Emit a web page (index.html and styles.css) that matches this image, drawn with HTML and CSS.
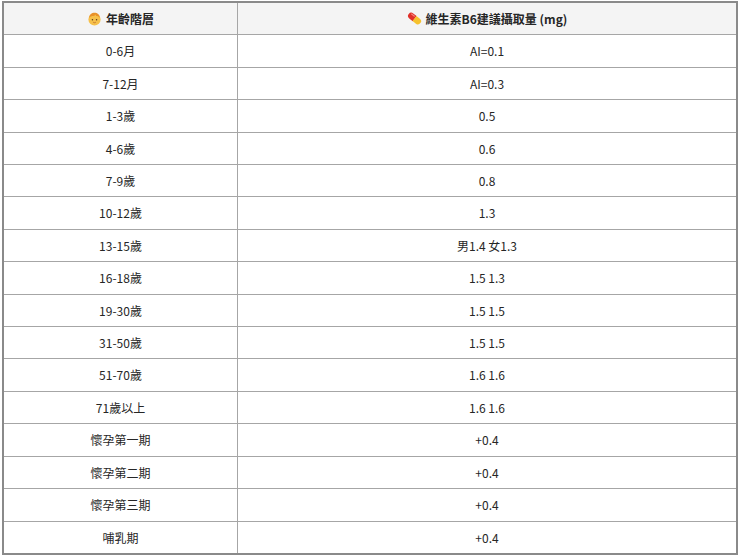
FILE: index.html
```html
<!DOCTYPE html>
<html lang="zh-Hant">
<head>
<meta charset="utf-8">
<link rel="stylesheet" href="styles.css">
</head>
<body>
<div class="wrap">
<table class="tbl">
  <thead>
    <tr>
      <th class="c1"><span class="hd"><svg class="ico" viewBox="0 0 16 16" aria-hidden="true"><circle cx="8" cy="9" r="6.5" fill="#f6c04a"/><path d="M2.2 7.5 C2.5 3.5 5 1.8 8 1.8 C11 1.8 13.5 3.5 13.8 7.5 C12.5 5.8 11 5.2 9.5 5.4 C9.8 4.6 9.4 4 8.8 3.8 C8.9 4.6 8.2 5.3 6.8 5.4 C5 5.4 3.4 6 2.2 7.5 Z" fill="#e8912a"/><circle cx="5.8" cy="9.3" r="0.8" fill="#5a3a1a"/><circle cx="10.2" cy="9.3" r="0.8" fill="#5a3a1a"/><path d="M6.6 12 Q8 13 9.4 12" stroke="#b5652a" stroke-width="0.8" fill="none"/></svg>年齡階層</span></th>
      <th class="c2"><span class="hd"><svg class="ico" viewBox="0 0 16 16" aria-hidden="true"><g transform="rotate(38 8 8)"><path d="M8 4.6 H3.4 A3.4 3.4 0 0 0 3.4 11.4 H8 Z" transform="translate(0.2 0)" fill="#e0302a"/><path d="M8 4.6 H12.6 A3.4 3.4 0 0 1 12.6 11.4 H8 Z" fill="#f6c22e"/><rect x="2" y="5.6" width="5" height="1.1" rx="0.55" fill="#f7948a" opacity="0.85"/></g></svg>維生素B6建議攝取量 (mg)</span></th>
    </tr>
  </thead>
  <tbody>
    <tr><td>0-6月</td><td>AI=0.1</td></tr>
    <tr><td>7-12月</td><td>AI=0.3</td></tr>
    <tr><td>1-3歲</td><td>0.5</td></tr>
    <tr><td>4-6歲</td><td>0.6</td></tr>
    <tr><td>7-9歲</td><td>0.8</td></tr>
    <tr><td>10-12歲</td><td>1.3</td></tr>
    <tr><td>13-15歲</td><td>男1.4 女1.3</td></tr>
    <tr><td>16-18歲</td><td>1.5 1.3</td></tr>
    <tr><td>19-30歲</td><td>1.5 1.5</td></tr>
    <tr><td>31-50歲</td><td>1.5 1.5</td></tr>
    <tr><td>51-70歲</td><td>1.6 1.6</td></tr>
    <tr><td>71歲以上</td><td>1.6 1.6</td></tr>
    <tr><td>懷孕第一期</td><td>+0.4</td></tr>
    <tr><td>懷孕第二期</td><td>+0.4</td></tr>
    <tr><td>懷孕第三期</td><td>+0.4</td></tr>
    <tr><td>哺乳期</td><td>+0.4</td></tr>
  </tbody>
</table>
</div>
</body>
</html>
```
FILE: styles.css
```css
html, body {
  margin: 0;
  padding: 0;
  background: #ffffff;
}
.wrap {
  padding: 1px 2px 0 2px;
}
.tbl {
  width: 736px;
  border-collapse: collapse;
  border: 2px solid #8a8a8a;
  font-family: "Noto Sans CJK TC", "Noto Sans", sans-serif;
  font-size: 12px;
  color: #262626;
}
.tbl th,
.tbl td {
  border: 1px solid #a6a6a6;
  padding: 7px 8px;
  height: 17.4px;
  text-align: center;
  font-weight: 400;
  line-height: 17.4px;
}
.tbl th {
  background: #f4f4f4;
  font-weight: 700;
}
.c1 {
  width: 217px;
}
.hd {
  display: inline-flex;
  align-items: center;
  gap: 4px;
  height: 17px;
  vertical-align: top;
}
.ico {
  width: 15px;
  height: 15px;
  flex: none;
}
```
